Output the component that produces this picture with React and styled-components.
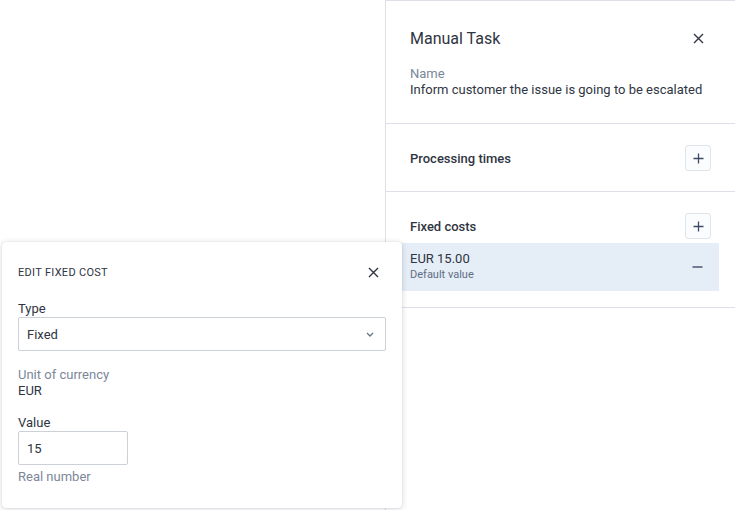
import React from 'react';
import styled, { createGlobalStyle } from 'styled-components';

const GlobalStyle = createGlobalStyle`
  html, body {
    margin: 0;
    padding: 0;
    background: #ffffff;
  }
  body {
    font-family: Roboto, "Liberation Sans", sans-serif;
    color: #2f3542;
  }
`;

const Page = styled.div`
  position: relative;
  display: flex;
  justify-content: flex-end;
  width: 735px;
  height: 510px;
  overflow: hidden;
`;

const SidePanel = styled.aside`
  width: 350px;
  height: 100%;
  box-sizing: border-box;
  border-left: 1px solid #dde1e7;
  border-top: 1px solid #dde1e7;
  display: flex;
  flex-direction: column;
`;

const Section = styled.section`
  padding: ${({ $pad }) => $pad};
  border-bottom: 1px solid #dde1e7;
`;

const HeaderRow = styled.div`
  display: flex;
  align-items: center;
  justify-content: space-between;
  height: 24px;
  padding-right: 7px;
`;

const Title = styled.h1`
  margin: 0;
  font-size: 16px;
  font-weight: 400;
  color: #2f3542;
`;

const IconButton = styled.button`
  display: flex;
  align-items: center;
  justify-content: center;
  padding: 0;
  border: none;
  background: none;
  color: #2f3542;
  width: 12px;
  height: 12px;
`;

const FieldLabel = styled.div`
  margin-top: ${({ $top }) => $top || 0}px;
  font-size: 13px;
  line-height: 16px;
  color: ${({ $dark }) => ($dark ? '#2f3542' : '#7b8799')};
`;

const FieldValue = styled.div`
  font-size: 13px;
  line-height: 16px;
  color: #2f3542;
`;

const GroupRow = styled.div`
  display: flex;
  align-items: center;
  justify-content: space-between;
  height: 26px;
  padding: ${({ $inset }) => ($inset ? '0 24px 0 8px' : '0')};
`;

const GroupTitle = styled.h2`
  margin: 0;
  font-size: 13px;
  font-weight: 500;
  color: #2f3542;
`;

const AddButton = styled.button`
  width: 26px;
  height: 26px;
  padding: 0;
  display: flex;
  align-items: center;
  justify-content: center;
  border: 1px solid #dfe4ea;
  border-radius: 3px;
  background: #fbfcfd;
  color: #3d4a66;
`;

const CostRow = styled.div`
  margin: 4px 16px 0 0;
  height: 48px;
  padding: 0 16px 0 8px;
  background: #e5edf7;
  display: flex;
  align-items: center;
  justify-content: space-between;
`;

const CostText = styled.div`
  display: flex;
  flex-direction: column;
`;

const CostAmount = styled.span`
  font-size: 13px;
  line-height: 16px;
  color: #2f3542;
`;

const CostNote = styled.span`
  font-size: 11px;
  line-height: 16px;
  color: #5f6d84;
`;

const Dialog = styled.div`
  position: absolute;
  left: 2px;
  top: 242px;
  width: 400px;
  height: 266px;
  box-sizing: border-box;
  padding: 17px 16px 24px;
  background: #ffffff;
  border-radius: 4px;
  box-shadow: 0 1px 6px rgba(30, 40, 60, 0.18), 0 0 1px rgba(30, 40, 60, 0.2);
`;

const DialogHeader = styled.div`
  display: flex;
  align-items: center;
  justify-content: space-between;
  height: 26px;
  padding-right: 7px;
  margin-bottom: 16px;
`;

const DialogTitle = styled.h3`
  margin: 0;
  font-size: 11px;
  font-weight: 400;
  letter-spacing: 0.3px;
  color: #2f3542;
`;

const SelectBox = styled.div`
  height: 34px;
  box-sizing: border-box;
  border: 1px solid #ccd1d8;
  border-radius: 2px;
  display: flex;
  align-items: center;
  justify-content: space-between;
  padding: 0 11px 0 8px;
  font-size: 13px;
  color: #2f3542;
`;

const NumberInput = styled.div`
  width: 110px;
  height: 34px;
  box-sizing: border-box;
  border: 1px solid #ccd1d8;
  border-radius: 2px;
  display: flex;
  align-items: center;
  padding: 0 8px;
  font-size: 13px;
  color: #2f3542;
`;

const CloseIcon = () => (
  <svg width="11" height="11" viewBox="0 0 11 11" fill="none" stroke="currentColor" strokeWidth="1.4">
    <path d="M1 1 L10 10 M10 1 L1 10" />
  </svg>
);

const PlusIcon = () => (
  <svg width="11" height="11" viewBox="0 0 11 11" fill="none" stroke="currentColor" strokeWidth="1.3">
    <path d="M5.5 0.5 V10.5 M0.5 5.5 H10.5" />
  </svg>
);

const MinusIcon = () => (
  <svg width="11" height="4" viewBox="0 0 11 4" fill="none" stroke="#55607a" strokeWidth="1.6">
    <path d="M0.5 2 H10.5" />
  </svg>
);

const ChevronIcon = () => (
  <svg width="8" height="5" viewBox="0 0 8 5" fill="none" stroke="#6a7385" strokeWidth="1.3">
    <path d="M1 1 L4 4 L7 1" />
  </svg>
);

const App = () => (
  <>
    <GlobalStyle />
    <Page>
      <SidePanel>
        <Section $pad="25px 24px 25px 24px">
          <HeaderRow>
            <Title>Manual Task</Title>
            <IconButton><CloseIcon /></IconButton>
          </HeaderRow>
          <FieldLabel $top={16}>Name</FieldLabel>
          <FieldValue>Inform customer the issue is going to be escalated</FieldValue>
        </Section>
        <Section $pad="21px 24px 20px 24px">
          <GroupRow>
            <GroupTitle>Processing times</GroupTitle>
            <AddButton><PlusIcon /></AddButton>
          </GroupRow>
        </Section>
        <Section $pad="21px 0 16px 16px">
          <GroupRow $inset>
            <GroupTitle>Fixed costs</GroupTitle>
            <AddButton><PlusIcon /></AddButton>
          </GroupRow>
          <CostRow>
            <CostText>
              <CostAmount>EUR 15.00</CostAmount>
              <CostNote>Default value</CostNote>
            </CostText>
            <MinusIcon />
          </CostRow>
        </Section>
      </SidePanel>

      <Dialog>
        <DialogHeader>
          <DialogTitle>EDIT FIXED COST</DialogTitle>
          <IconButton><CloseIcon /></IconButton>
        </DialogHeader>
        <FieldLabel $dark>Type</FieldLabel>
        <SelectBox>
          <span>Fixed</span>
          <ChevronIcon />
        </SelectBox>
        <FieldLabel $top={16}>Unit of currency</FieldLabel>
        <FieldValue>EUR</FieldValue>
        <FieldLabel $top={16} $dark>Value</FieldLabel>
        <NumberInput>15</NumberInput>
        <FieldLabel $top={4}>Real number</FieldLabel>
      </Dialog>
    </Page>
  </>
);

export default App;
